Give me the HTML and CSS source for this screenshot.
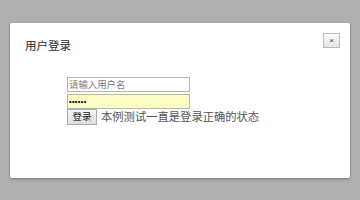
FILE: index.html
```html
<!DOCTYPE html>
<html>
<head>
<meta charset="utf-8">
<link rel="stylesheet" href="styles.css">
</head>
<body>
<div class="dialog">
  <div class="header">
    <div class="title">用户登录</div>
    <button class="close">×</button>
  </div>
  <form class="form">
    <input class="field" type="text" placeholder="请输入用户名">
    <input class="field pwd" type="password" value="123456">
    <div class="row">
      <button class="btn" type="button">登录</button>
      <span class="note">本例测试一直是登录正确的状态</span>
    </div>
  </form>
</div>
</body>
</html>
```
FILE: styles.css
```css
html, body {
  margin: 0;
  padding: 0;
  background: #b0b0b0;
  width: 360px;
  height: 200px;
  overflow: hidden;
  font-family: "Liberation Sans", "Noto Sans CJK SC", sans-serif;
}
body {
  padding: 23px 10px 0 10px;
  box-sizing: border-box;
}
.dialog {
  width: 340px;
  height: 155px;
  background: #fff;
  border-radius: 2px;
  box-shadow: 0 1px 3px rgba(0,0,0,0.35);
  box-sizing: border-box;
  padding: 10px 10px 0 15px;
}
.header {
  display: flex;
  justify-content: space-between;
  align-items: flex-start;
}
.title {
  font-size: 11.5px;
  color: #2a2a2a;
  margin-top: 6px;
  line-height: 14px;
}
.close {
  width: 17px;
  height: 15px;
  margin: 0;
  padding: 0;
  border: 1px solid #bbb;
  background: linear-gradient(#fafafa, #e6e6e6);
  font-size: 8px;
  line-height: 12px;
  color: #333;
  font-family: "Liberation Sans", sans-serif;
}
.form {
  margin: 24px 0 0 42px;
  display: flex;
  flex-direction: column;
  align-items: flex-start;
}
.field {
  width: 123px;
  height: 15px;
  box-sizing: border-box;
  margin: 0 0 2px 0;
  padding: 0 1px;
  border: 1px solid #b5b5b5;
  font-size: 9.4px;
  font-family: "Liberation Sans", "Noto Sans CJK SC", sans-serif;
  color: #000;
  outline: none;
}
.field::placeholder {
  color: #7a7a7a;
}
.pwd {
  background: #fcfcc4;
  border-color: #b8b8a0;
  margin-bottom: 0;
  font-size: 7.5px;
  letter-spacing: 0.3px;
}
.row {
  display: flex;
  align-items: center;
}
.btn {
  width: 30px;
  height: 16px;
  margin: 0;
  padding: 0;
  border: 1px solid #aaa;
  background: linear-gradient(#f6f6f6, #dddddd);
  font-size: 9.5px;
  font-family: "Liberation Sans", "Noto Sans CJK SC", sans-serif;
  color: #111;
  line-height: 14px;
}
.note {
  margin-left: 4px;
  font-size: 11.3px;
  color: #555;
  line-height: 16px;
}
```
